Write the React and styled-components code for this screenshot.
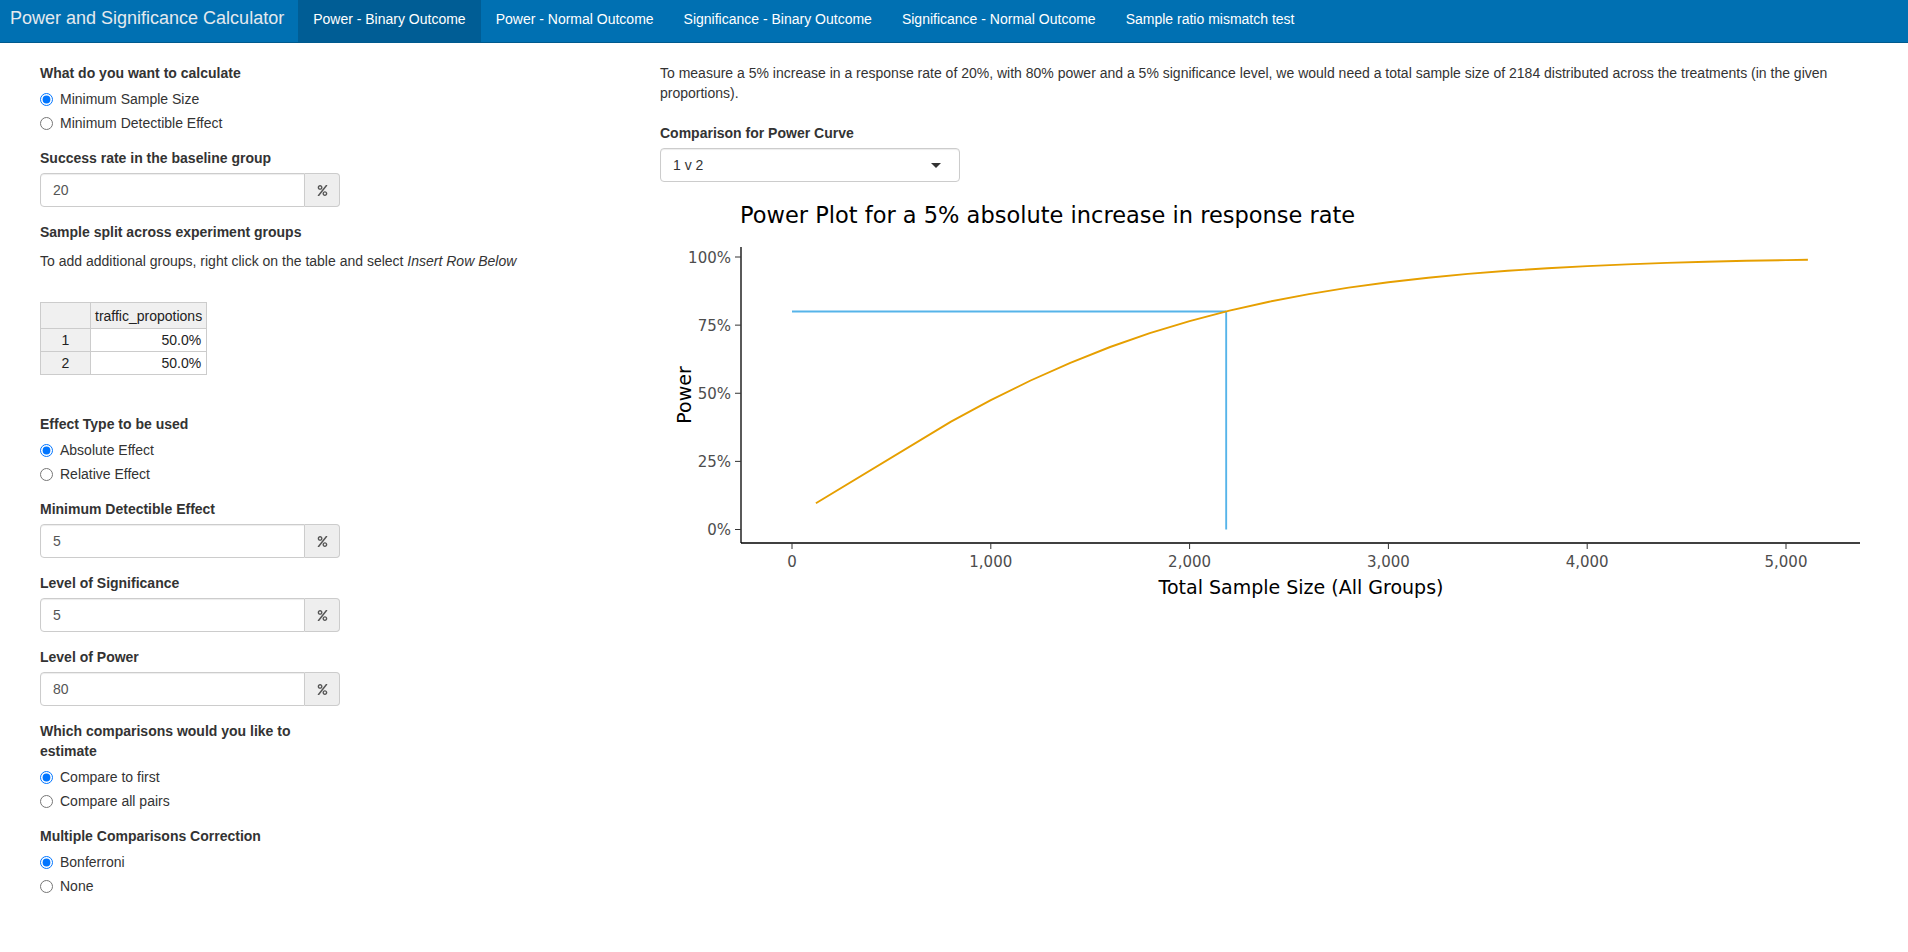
import React from 'react'
import styled, { createGlobalStyle } from 'styled-components'
import { FaPercent } from 'react-icons/fa'

const GlobalStyle = createGlobalStyle`
  html, body { margin: 0; padding: 0; background: #fff; }
  body {
    font-family: "Liberation Sans", Arial, Helvetica, sans-serif;
    font-size: 14px;
    line-height: 20px;
    color: #333;
  }
  * { box-sizing: border-box; }
`

const tabs = [
  'Power - Binary Outcome',
  'Power - Normal Outcome',
  'Significance - Binary Outcome',
  'Significance - Normal Outcome',
  'Sample ratio mismatch test',
]

// normal cdf, Abramowitz-Stegun
function pnorm(x) {
  const t = 1 / (1 + 0.3275911 * Math.abs(x) / Math.SQRT2)
  const y = 1 - (((((1.061405429 * t - 1.453152027) * t) + 1.421413741) * t - 0.284496736) * t + 0.254829592) * t * Math.exp(-x * x / 2)
  return x >= 0 ? (1 + y) / 2 : (1 - y) / 2
}

function power(total) {
  const n = total / 2
  const v = 0.2 * 0.8 + 0.25 * 0.75
  return pnorm(0.05 / Math.sqrt(v / n) - 1.96)
}

function App() {
  return (
    <>
      <GlobalStyle />
      <NavBar>
        <Brand>Power and Significance Calculator</Brand>
        {tabs.map((t, i) => (
          <NavTab key={t} $active={i === 0}>{t}</NavTab>
        ))}
      </NavBar>
      <Page>
        <Sidebar>
          <RadioGroup
            label="What do you want to calculate"
            options={['Minimum Sample Size', 'Minimum Detectible Effect']}
          />
          <PercentInput label="Success rate in the baseline group" value="20" />
          <FormLabel>Sample split across experiment groups</FormLabel>
          <Help>
            To add additional groups, right click on the table and select <em>Insert Row Below</em>
          </Help>
          <Grid>
            <thead>
              <tr>
                <Corner />
                <HeadCell>traffic_propotions</HeadCell>
              </tr>
            </thead>
            <tbody>
              {['1', '2'].map(r => (
                <tr key={r}>
                  <RowHead>{r}</RowHead>
                  <Cell>50.0%</Cell>
                </tr>
              ))}
            </tbody>
          </Grid>
          <RadioGroup
            label="Effect Type to be used"
            options={['Absolute Effect', 'Relative Effect']}
          />
          <PercentInput label="Minimum Detectible Effect" value="5" />
          <PercentInput label="Level of Significance" value="5" />
          <PercentInput label="Level of Power" value="80" />
          <RadioGroup
            label="Which comparisons would you like to estimate"
            options={['Compare to first', 'Compare all pairs']}
          />
          <RadioGroup
            label="Multiple Comparisons Correction"
            options={['Bonferroni', 'None']}
          />
        </Sidebar>
        <Main>
          <Summary>
            To measure a 5% increase in a response rate of 20%, with 80% power and a 5% significance level, we would need a total sample size of 2184 distributed across the treatments (in the given proportions).
          </Summary>
          <FormLabel>Comparison for Power Curve</FormLabel>
          <Select>
            <span>1 v 2</span>
            <Caret />
          </Select>
          <PowerPlot />
        </Main>
      </Page>
    </>
  )
}

function RadioGroup({ label, options }) {
  const name = label.replace(/\s/g, '')
  return (
    <Group>
      <FormLabel>{label}</FormLabel>
      <Options>
        {options.map((o, i) => (
          <RadioRow key={o}>
            <Radio type="radio" name={name} defaultChecked={i === 0} />
            {o}
          </RadioRow>
        ))}
      </Options>
    </Group>
  )
}

function PercentInput({ label, value }) {
  return (
    <Group>
      <FormLabel>{label}</FormLabel>
      <InputGroup>
        <TextInput defaultValue={value} />
        <Addon><FaPercent size={11} /></Addon>
      </InputGroup>
    </Group>
  )
}

function PowerPlot() {
  const x = n => 132 + n * 0.1988
  const y = p => 332.5 - p * 272.5
  const ns = [120, 800]
  for (let n = 1000; n < 5110; n += 200) ns.push(n)
  ns.push(5110)
  const d = ns.map((n, i) => `${i ? 'L' : 'M'}${x(n).toFixed(1)},${y(power(n)).toFixed(1)}`).join(' ')
  const yTicks = [[1, '100%'], [0.75, '75%'], [0.5, '50%'], [0.25, '25%'], [0, '0%']]
  const xTicks = [0, 1000, 2000, 3000, 4000, 5000]
  return (
    <Plot width="100%" height="420">
      <text x="80" y="26" fontSize="22.5" fill="#000">Power Plot for a 5% absolute increase in response rate</text>
      <line x1="81" y1="50" x2="81" y2="346" stroke="#000" strokeWidth="1.3" />
      <line x1="81" y1="346" x2="1200" y2="346" stroke="#000" strokeWidth="1.3" />
      {yTicks.map(([p, l]) => (
        <g key={l}>
          <line x1="75" x2="81" y1={y(p)} y2={y(p)} stroke="#333" />
          <text x="71" y={y(p) + 5.5} textAnchor="end" fontSize="15" fill="#4d4d4d">{l}</text>
        </g>
      ))}
      {xTicks.map(n => (
        <g key={n}>
          <line x1={x(n)} x2={x(n)} y1="346" y2="352" stroke="#333" />
          <text x={x(n)} y="370" textAnchor="middle" fontSize="15" fill="#4d4d4d">{n.toLocaleString('en-US')}</text>
        </g>
      ))}
      <line x1={x(0)} y1={y(0.8)} x2={x(2184)} y2={y(0.8)} stroke="#56B4E9" strokeWidth="1.9" />
      <line x1={x(2184)} y1={y(0.8)} x2={x(2184)} y2={y(0)} stroke="#56B4E9" strokeWidth="1.9" />
      <path d={d} fill="none" stroke="#E69F00" strokeWidth="1.9" strokeLinejoin="round" />
      <text x="641" y="397" textAnchor="middle" fontSize="19" fill="#000">Total Sample Size (All Groups)</text>
      <text transform="translate(31,198) rotate(-90)" textAnchor="middle" fontSize="19" fill="#000">Power</text>
    </Plot>
  )
}

export default App

const NavBar = styled.nav`
  display: flex;
  height: 43px;
  background: #0070b2;
  border-bottom: 1px solid #005a8e;
`
const Brand = styled.div`
  padding: 8px 14px 0 10px;
  font-size: 18px;
  line-height: 20px;
  color: #e3e9ee;
`
const NavTab = styled.a`
  padding: 9px 15px 0;
  color: #fff;
  font-size: 14px;
  line-height: 20px;
  background: ${p => (p.$active ? '#005d95' : 'transparent')};
`
const Page = styled.div`
  display: grid;
  grid-template-columns: 620px 1fr;
  padding: 20px 30px 20px 40px;
`
const Sidebar = styled.div``
const Main = styled.div``
const Group = styled.div`
  width: 300px;
  margin-bottom: 15px;
`
const FormLabel = styled.label`
  display: block;
  font-weight: bold;
  margin-bottom: 5px;
`
const Options = styled.div`
  display: flex;
  flex-direction: column;
  gap: 4px;
  padding-top: 1px;
`
const RadioRow = styled.label`
  display: flex;
  align-items: center;
  gap: 7px;
  height: 20px;
`
const Radio = styled.input`
  width: 13px;
  height: 13px;
  margin: 0;
`
const InputGroup = styled.div`
  display: flex;
  height: 34px;
`
const TextInput = styled.input`
  flex: 1;
  min-width: 0;
  padding: 6px 12px;
  font: inherit;
  color: #555;
  border: 1px solid #ccc;
  border-radius: 4px 0 0 4px;
  box-shadow: inset 0 1px 1px rgba(0, 0, 0, 0.075);
  outline: none;
`
const Addon = styled.span`
  display: flex;
  align-items: center;
  justify-content: center;
  width: 35px;
  background: #eee;
  border: 1px solid #ccc;
  border-left: 0;
  border-radius: 0 4px 4px 0;
  color: #555;
`
const Help = styled.p`
  margin: 9px 0 31px;
`
const Grid = styled.table`
  border-collapse: collapse;
  margin-bottom: 39px;
  font-size: 14px;
  color: #222;
`
const Corner = styled.th`
  width: 50px;
  height: 26px;
  background: #f0f0f0;
  border: 1px solid #ccc;
`
const HeadCell = styled.th`
  height: 26px;
  padding: 0 4px;
  font-weight: normal;
  text-align: left;
  background: #f0f0f0;
  border: 1px solid #ccc;
`
const RowHead = styled.th`
  height: 23px;
  font-weight: normal;
  background: #f0f0f0;
  border: 1px solid #ccc;
`
const Cell = styled.td`
  height: 23px;
  padding: 0 5px;
  text-align: right;
  border: 1px solid #ccc;
`
const Summary = styled.p`
  margin: 0 0 20px;
`
const Select = styled.div`
  display: flex;
  align-items: center;
  justify-content: space-between;
  width: 300px;
  height: 34px;
  margin-bottom: 15px;
  padding: 0 18px 0 12px;
  border: 1px solid #ccc;
  border-radius: 4px;
  box-shadow: inset 0 1px 1px rgba(0, 0, 0, 0.075);
  color: #333;
`
const Caret = styled.span`
  width: 0;
  height: 0;
  border-left: 5px solid transparent;
  border-right: 5px solid transparent;
  border-top: 5px solid #333;
`
const Plot = styled.svg`
  display: block;
  font-family: "DejaVu Sans", Verdana, sans-serif;
`
